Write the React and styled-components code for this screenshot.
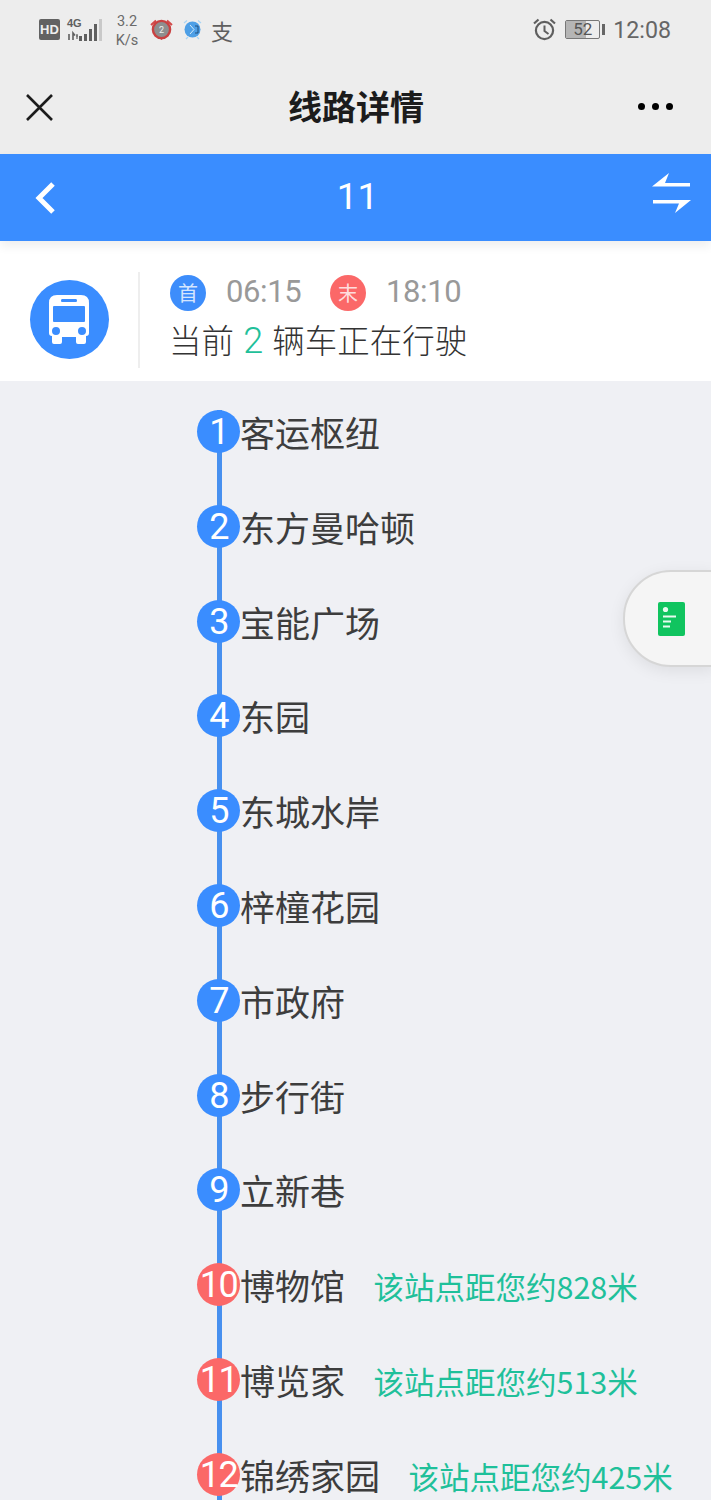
import React from "react";
import styled, { createGlobalStyle } from "styled-components";

const stops = [
  { name: "客运枢纽" },
  { name: "东方曼哈顿" },
  { name: "宝能广场" },
  { name: "东园" },
  { name: "东城水岸" },
  { name: "梓橦花园" },
  { name: "市政府" },
  { name: "步行街" },
  { name: "立新巷" },
  { name: "博物馆", near: "该站点距您约828米" },
  { name: "博览家", near: "该站点距您约513米" },
  { name: "锦绣家园", near: "该站点距您约425米" },
];

const App = () => {
  return (
    <Page>
      <GlobalStyle />
      <StatusBar>
        <StatusGroup>
          <HdBadge>HD</HdBadge>
          <SignalIcon />
          <NetSpeed>
            <span>3.2</span>
            <span>K/s</span>
          </NetSpeed>
          <RedAlarm />
          <BlueAlarm />
          <PayGlyph>支</PayGlyph>
        </StatusGroup>
        <StatusGroup>
          <ClockIcon />
          <Battery>
            <BatteryLevel />
            <BatteryText>52</BatteryText>
          </Battery>
          <BatteryCap />
          <Time>12:08</Time>
        </StatusGroup>
      </StatusBar>

      <NavBar>
        <svg width="29" height="29" viewBox="0 0 29 29">
          <path d="M2 2 L27 27 M27 2 L2 27" stroke="#1c1c1c" strokeWidth="2.6" fill="none" />
        </svg>
        <NavTitle>线路详情</NavTitle>
        <Dots>
          <Dot />
          <Dot />
          <Dot />
        </Dots>
      </NavBar>

      <LineHeader>
        <svg width="22" height="34" viewBox="0 0 22 34">
          <path d="M19 3 L5 17 L19 31" stroke="#fff" strokeWidth="5" fill="none" />
        </svg>
        <LineNumber>11</LineNumber>
        <SwapIcon width="40" height="40" viewBox="0 0 40 40">
          <path d="M0 13.5 L17 0 L13 10 H38 V13.5 Z M1 27 H39 L23 40 L27 30.5 H1 Z" fill="#fff" />
        </SwapIcon>
      </LineHeader>

      <InfoPanel>
        <BusCell>
          <BusCircle>
            <svg width="42" height="50" viewBox="0 0 42 50">
              <path
                fillRule="evenodd"
                d="M9 0 H33 Q41 0 41 8 V38 Q41 41 38 41 V47 Q38 49 36 49 H30 Q28 49 28 47 V42 H14 V47 Q14 49 12 49 H6 Q4 49 4 47 V41 Q1 41 1 38 V8 Q1 0 9 0 Z M14 4 Q13 4 13 5.5 Q13 7 14 7 H28 Q29 7 29 5.5 Q29 4 28 4 Z M5 12 V26 Q5 27 6 27 H36 Q37 27 37 26 V12 Q37 11 36 11 H6 Q5 11 5 12 Z M8 32 A4 4 0 1 0 8 40 A4 4 0 1 0 8 32 Z M34 32 A4 4 0 1 0 34 40 A4 4 0 1 0 34 32 Z"
                fill="#fff"
              />
            </svg>
          </BusCircle>
        </BusCell>
        <InfoText>
          <ServiceRow>
            <ServiceBadge $color="#3d8dfb">首</ServiceBadge>
            <ServiceTime>06:15</ServiceTime>
            <ServiceBadge $color="#fb6868">末</ServiceBadge>
            <ServiceTime>18:10</ServiceTime>
          </ServiceRow>
          <RunningRow>
            当前 <RunningCount>2</RunningCount> 辆车正在行驶
          </RunningRow>
        </InfoText>
      </InfoPanel>

      <StopList>
        {stops.map((stop, i) => (
          <StopRow key={stop.name}>
            <StopNumber $near={!!stop.near}>{i + 1}</StopNumber>
            <StopName>{stop.name}</StopName>
            {stop.near && <NearText>{stop.near}</NearText>}
          </StopRow>
        ))}
        <FloatButton>
          <svg width="27" height="34" viewBox="0 0 27 34">
            <rect width="27" height="34" rx="2" fill="#10c45f" />
            <circle cx="7.5" cy="7.5" r="2.6" fill="#e8fbf0" />
            <path d="M5 14.5 H18 M5 19.5 H13 M5 24.5 H12" stroke="#e8fbf0" strokeWidth="2.2" />
          </svg>
        </FloatButton>
      </StopList>
    </Page>
  );
};

const SignalIcon = () => (
  <SignalWrap>
    <SignalText>4G</SignalText>
    <svg width="36" height="23" viewBox="0 0 36 23">
      <path d="M2 22 V16 M6 22 L6 15 L8 17.5" stroke="#5f5f5f" strokeWidth="1.6" fill="none" />
      <path d="M9 18 H11 M10 16 V21" stroke="#5f5f5f" strokeWidth="1.2" fill="none" />
      <rect x="12" y="18" width="3" height="5" fill="#5f5f5f" />
      <rect x="17" y="16" width="3" height="7" fill="#5f5f5f" />
      <rect x="22" y="11" width="3" height="12" fill="#5f5f5f" />
      <rect x="27" y="6" width="3" height="17" fill="#5f5f5f" />
      <rect x="32" y="1" width="3" height="22" fill="#c9c9c9" />
    </svg>
  </SignalWrap>
);

const RedAlarm = () => (
  <svg width="23" height="21" viewBox="0 0 23 21">
    <path d="M1 6 L6 1.5 M22 6 L17 1.5" stroke="#d24a4a" strokeWidth="2" />
    <circle cx="11.5" cy="10.5" r="8.6" fill="#8e8e8e" stroke="#c94141" strokeWidth="2.4" />
    <path d="M9 19 H14 L11.5 21 Z" fill="#c94141" />
    <text x="11.5" y="14" textAnchor="middle" fontSize="9" fontFamily="Roboto, sans-serif" fill="#eee">
      2
    </text>
  </svg>
);

const BlueAlarm = () => (
  <BlueAlarmSvg width="19" height="21" viewBox="0 0 19 21">
    <path d="M1 4 L4 1.5 M18 4 L15 1.5 M3 20 L5 18 M16 20 L14 18" stroke="#a8d4f5" strokeWidth="1.2" />
    <circle cx="9.5" cy="10.5" r="8" fill="#4d9fe6" />
    <path d="M7 6 L11 10.5 L7 15" stroke="#d5ecfb" strokeWidth="1" fill="none" />
    <path d="M12 7 H15 V14 H12" stroke="#234f7c" strokeWidth="1" fill="none" />
  </BlueAlarmSvg>
);

const ClockIcon = () => (
  <svg width="23" height="23" viewBox="0 0 23 23">
    <circle cx="11.5" cy="12.5" r="8.6" fill="none" stroke="#5f5f5f" strokeWidth="2.2" />
    <path d="M11.5 7.5 V13 L15.5 16" fill="none" stroke="#5f5f5f" strokeWidth="2" />
    <path d="M1 5.5 L5.5 1.5 M22 5.5 L17.5 1.5" stroke="#5f5f5f" strokeWidth="2.2" />
  </svg>
);

const GlobalStyle = createGlobalStyle`
  html, body {
    margin: 0;
    padding: 0;
    height: 1500px;
    overflow: hidden;
    background: #eff0f4;
  }
`;

const Page = styled.div`
  width: 711px;
  height: 1500px;
  overflow: hidden;
  display: flex;
  flex-direction: column;
  font-family: "Noto Sans CJK SC", "Noto Sans", sans-serif;
  background: #eff0f4;
`;

const StatusBar = styled.div`
  height: 60px;
  flex: none;
  box-sizing: border-box;
  padding: 0 40px 1px 39px;
  display: flex;
  align-items: center;
  justify-content: space-between;
  background: #ededed;
`;

const StatusGroup = styled.div`
  display: flex;
  align-items: center;
`;

const HdBadge = styled.div`
  width: 21px;
  height: 21px;
  border-radius: 2px;
  background: #626262;
  color: #eee;
  font: 700 13px/21px "Liberation Sans", sans-serif;
  text-align: center;
`;

const SignalWrap = styled.div`
  position: relative;
  width: 36px;
  height: 23px;
  margin-left: 7px;
`;

const SignalText = styled.span`
  position: absolute;
  left: 0;
  top: -1px;
  font: 700 11px/12px "Liberation Sans", sans-serif;
  color: #5f5f5f;
`;

const NetSpeed = styled.div`
  width: 30px;
  margin: 2px 8px 0 9px;
  display: flex;
  flex-direction: column;
  align-items: center;
  font: 400 14.5px/19px Roboto, sans-serif;
  color: #6a6a6a;
`;

const BlueAlarmSvg = styled.svg`
  margin-left: 10px;
`;

const PayGlyph = styled.span`
  margin-left: 9px;
  width: 23px;
  font-size: 22px;
  line-height: 24px;
  color: #5f5f5f;
`;

const Battery = styled.div`
  position: relative;
  width: 33px;
  height: 17px;
  margin-left: 9px;
  border: 1px solid #777;
  border-radius: 2px;
`;

const BatteryLevel = styled.div`
  width: 60%;
  height: 100%;
  background: #b5b5b5;
`;

const BatteryText = styled.span`
  position: absolute;
  inset: 0;
  text-align: center;
  font: 400 17px/17px Roboto, sans-serif;
  color: #555;
`;

const BatteryCap = styled.div`
  width: 3px;
  height: 11px;
  margin: 0 8px 0 2px;
  background: #666;
`;

const Time = styled.span`
  font: 400 23.2px/28px Roboto, sans-serif;
  color: #666;
`;

const NavBar = styled.div`
  position: relative;
  height: 94px;
  flex: none;
  box-sizing: border-box;
  padding: 0 38px 0 25px;
  display: flex;
  align-items: center;
  justify-content: space-between;
  background: #ededed;
`;

const NavTitle = styled.div`
  font-size: 34px;
  font-weight: 700;
  line-height: 46px;
  color: #1c1c1c;
  margin: 0 0 2px 20px;
`;

const Dots = styled.div`
  width: 35px;
  margin-bottom: 2px;
  display: flex;
  justify-content: space-between;
`;

const Dot = styled.span`
  width: 7px;
  height: 7px;
  border-radius: 50%;
  background: #000;
`;

const LineHeader = styled.div`
  position: relative;
  z-index: 1;
  height: 87px;
  flex: none;
  box-sizing: border-box;
  padding: 0 19px 0 34px;
  display: flex;
  align-items: center;
  justify-content: space-between;
  background: #3a8dff;
  box-shadow: 0 5px 10px rgba(0, 0, 0, 0.07);
`;

const LineNumber = styled.div`
  font: 400 37px/44px Roboto, sans-serif;
  color: #fff;
  margin: 0 0 2px 7px;
`;

const SwapIcon = styled.svg`
  margin-bottom: 9px;
`;

const InfoPanel = styled.div`
  height: 140px;
  flex: none;
  box-sizing: border-box;
  padding-top: 16px;
  display: flex;
  align-items: center;
  background: #fff;
`;

const BusCell = styled.div`
  width: 138px;
  height: 96px;
  margin-top: 1px;
  border-right: 2px solid #eeeeee;
  display: flex;
  align-items: center;
  justify-content: center;
`;

const BusCircle = styled.div`
  width: 79px;
  height: 79px;
  border-radius: 50%;
  background: #3a8dff;
  display: flex;
  align-items: center;
  justify-content: center;
`;

const InfoText = styled.div`
  margin-left: 29px;
  margin-top: 3px;
  display: flex;
  flex-direction: column;
`;

const ServiceRow = styled.div`
  display: flex;
  align-items: center;
  height: 36px;
  margin-left: 1px;
`;

const ServiceBadge = styled.span`
  flex: none;
  width: 36px;
  height: 36px;
  border-radius: 50%;
  background: ${(p) => p.$color};
  color: rgba(255, 255, 255, 0.8);
  font-size: 20px;
  line-height: 36px;
  text-align: center;
`;

const ServiceTime = styled.span`
  flex: none;
  width: 124px;
  height: 36px;
  padding-left: 20px;
  box-sizing: border-box;
  font: 400 31px/33px Roboto, sans-serif;
  letter-spacing: -0.4px;
  color: #999;
`;

const RunningRow = styled.div`
  margin-top: 3px;
  font-size: 32.5px;
  font-weight: 300;
  word-spacing: 2px;
  line-height: 49px;
  color: #333;
  white-space: nowrap;
`;

const RunningCount = styled.span`
  font-family: Roboto, sans-serif;
  font-size: 36px;
  color: #1fc09a;
`;

const StopList = styled.div`
  position: relative;
  padding-top: 3px;
  flex: 1;
`;

const StopRow = styled.div`
  position: relative;
  height: 94.8px;
  box-sizing: border-box;
  padding-left: 197px;
  display: flex;
  align-items: flex-start;

  &::before {
    content: "";
    position: absolute;
    left: 217px;
    top: 26px;
    width: 5px;
    height: 95px;
    background: #4790ef;
  }
`;

const StopNumber = styled.div`
  position: relative;
  flex: none;
  width: 43px;
  height: 43px;
  margin-top: 26px;
  border-radius: 50%;
  background: ${(p) => (p.$near ? "#fb6868" : "#3a8dff")};
  color: #fff;
  font: 400 36px/44px Roboto, sans-serif;
  letter-spacing: -1.5px;
  white-space: nowrap;
  display: flex;
  justify-content: center;
`;

const StopName = styled.div`
  margin-top: 23px;
  font-size: 35px;
  font-weight: 400;
  line-height: 50px;
  color: #3d3d3d;
  white-space: nowrap;
`;

const NearText = styled.div`
  margin-top: 27px;
  margin-left: 28.5px;
  font-size: 30.5px;
  font-weight: 400;
  line-height: 44px;
  color: #1fc09a;
  white-space: nowrap;
`;

const FloatButton = styled.div`
  position: absolute;
  right: -4px;
  top: 189px;
  width: 92px;
  height: 97px;
  box-sizing: border-box;
  padding-left: 33px;
  display: flex;
  align-items: center;
  background: #f5f5f5;
  border: 2px solid #d6d6d6;
  border-radius: 48px 0 0 48px;
  box-shadow: 0 4px 16px rgba(0, 0, 0, 0.08);
`;

export default App;
